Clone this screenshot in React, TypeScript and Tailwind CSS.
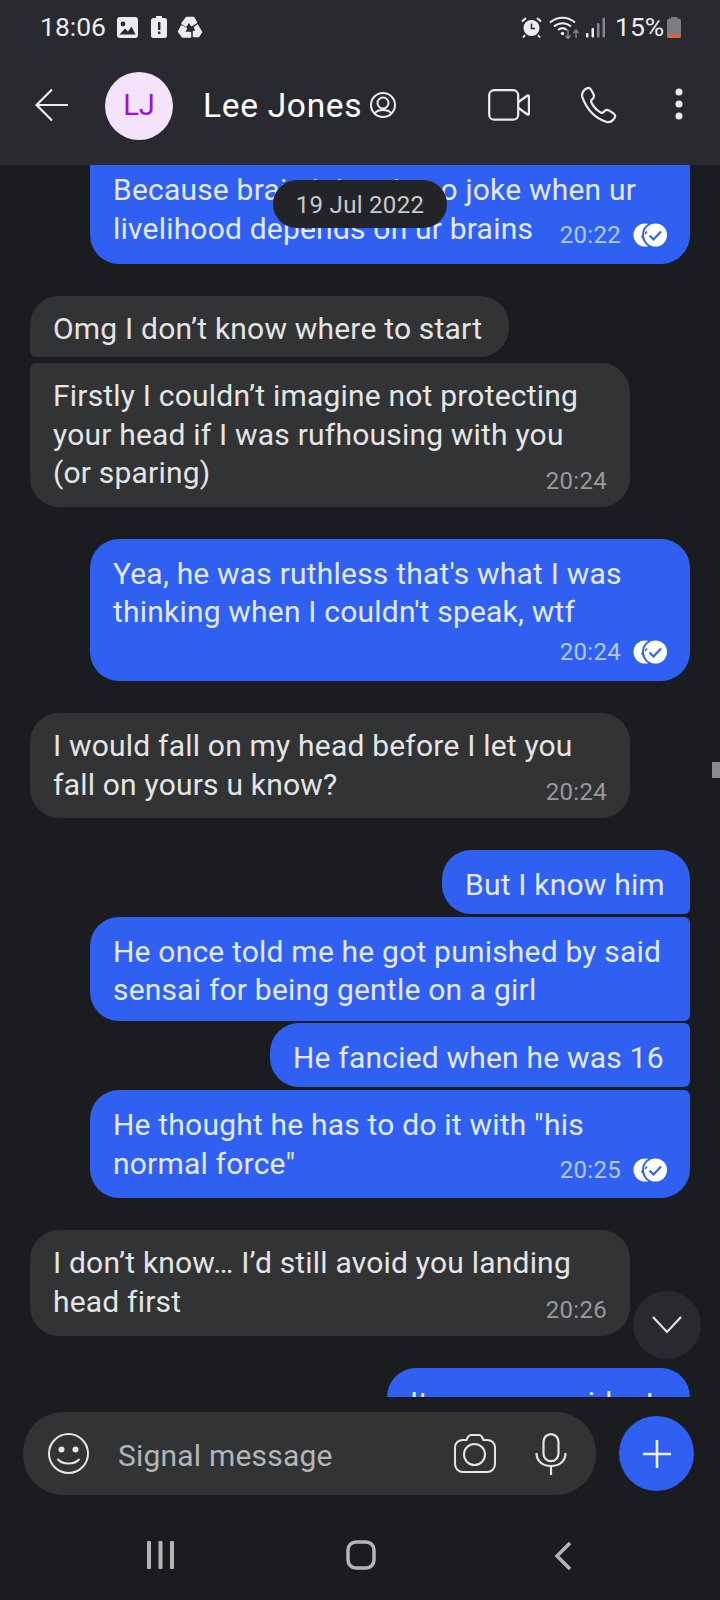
import React from "react";

const Ticks = () => (
  <svg width="34" height="24" viewBox="0 0 34 24" className="shrink-0">
    <circle cx="12" cy="12" r="11.5" fill="#fff" />
    <circle cx="22" cy="12" r="13" fill="#2f60f2" />
    <circle cx="22.500" cy="12" r="11.500" fill="#fff" />
    <path d="M8.500 13l2.500 3M12 11l2-2.500" stroke="#2f60f2" strokeWidth="1.500" fill="none" />
    <path d="M16.500 12.500l4 4 7.500-8" stroke="#2f60f2" strokeWidth="2" fill="none" />
  </svg>
);

const Meta = ({ time, out }: { time: string; out?: boolean }) => (
  <div className={`flex items-center justify-end gap-[12px] text-[24px] leading-[28px] tracking-[0.3px] ${out ? "text-[#b5c8fb]" : "text-[#98999b]"}`}>
    <span>{time}</span>
    {out && <Ticks />}
  </div>
);

const In = ({ children, cls, meta }: { children: React.ReactNode; cls: string; meta?: React.ReactNode }) => (
  <div className={`${cls} shrink-0 rounded-[29px] bg-[#323335] pl-[23px] pr-[23px] pt-[14px] text-[30px] leading-[38.700px] tracking-[0.2px] text-[#e4e5e7]`}>
    {children}
    {meta}
  </div>
);

function Out({ children, cls }: { children: React.ReactNode; cls: string }) {
  return (
    <div className={`${cls} ml-auto shrink-0 rounded-[29px] bg-[#2f60f2] pl-[23px] pr-[23px] pt-[15.500px] text-[30px] leading-[38.700px] tracking-[0.2px] text-[#e3e9fd]`}>
      {children}
    </div>
  );
}

export default function App() {
  return (
    <div className="flex h-[1600px] w-[720px] flex-col overflow-hidden bg-[#1b1c1f] font-['Roboto',sans-serif]">
      {/* Header */}
      <header className="h-[165px] shrink-0 bg-[#282a30] text-[#ececee]">
        <div className="flex h-[54px] items-center pl-[40px] pr-[39px]">
          <span className="text-[26.500px] leading-none">18:06</span>
          <svg className="ml-[11px]" width="21" height="21" viewBox="0 0 21 21">
            <rect width="21" height="21" rx="3" fill="#ececee" />
            <circle cx="6" cy="7" r="2.400" fill="#282a30" />
            <path d="M2.500 17.500l5.500-6 3 3 3.500-5 4 8z" fill="#282a30" />
          </svg>
          <svg className="ml-[13px]" width="16" height="22" viewBox="0 0 16 22">
            <path d="M5 0h6v2h2.500A2.500 2.500 0 0116 4.500V19.500A2.500 2.500 0 0113.500 22h-11A2.500 2.500 0 010 19.500V4.500A2.500 2.500 0 012.500 2H5z" fill="#ececee" />
            <rect x="7" y="6" width="2.400" height="8" fill="#282a30" />
            <rect x="7" y="15.500" width="2.400" height="2.500" fill="#282a30" />
          </svg>
          <svg className="ml-[10px]" width="26" height="24" viewBox="0 0 26 24" fill="#ececee" stroke="#ececee" strokeWidth="1.500" strokeLinejoin="round">
            <path d="M9.500 2.500h7l3 5-5 3-2.500-4-3 4.500-4-2.500z" />
            <path d="M20.500 10l4 7-3 4.500h-5v-5h3l-2-4z" />
            <path d="M13.500 22h-8l-4-5.500 3-5.500 5 2.500-2.500 4h6.500z" />
          </svg>
          <div className="flex-1" />
          <svg width="21" height="21" viewBox="0 0 21 21">
            <circle cx="10.500" cy="11" r="8" fill="#ececee" />
            <path d="M10.500 6.500V11.500H14" stroke="#282a30" strokeWidth="1.600" fill="none" />
            <path d="M1 4.500L5 1M20 4.500L16 1M4 18l-2 2.500M17 18l2 2.500" stroke="#ececee" strokeWidth="2" fill="none" />
          </svg>
          <svg className="ml-[7px]" width="31" height="24" viewBox="0 0 31 24">
            <path d="M1 7.500C8 1 19 1 26 7.500M5 11.500C10 7 17 7 22 11.500M9 15C12 12.500 15 12.500 18 15" stroke="#ececee" strokeWidth="2" fill="none" />
            <circle cx="13.500" cy="18.500" r="1.800" fill="#ececee" />
            <path d="M19 15v8M16.500 20.500L19 23.500 21.500 20.500" stroke="#85868a" strokeWidth="1.500" fill="none" />
            <path d="M27 23v-8M24.500 18L27 15 29.500 18" stroke="#85868a" strokeWidth="1.500" fill="none" />
          </svg>
          <svg className="ml-[6px]" width="19" height="21" viewBox="0 0 19 21">
            <rect x="0" y="16" width="2.500" height="4.500" rx="1" fill="#ececee" />
            <rect x="5.500" y="11" width="2.500" height="9.500" rx="1" fill="#ececee" />
            <rect x="11" y="6" width="2.500" height="14.500" rx="1" fill="#85868a" />
            <rect x="16.500" y="0.500" width="2.500" height="20" rx="1" fill="#85868a" />
          </svg>
          <span className="ml-[10px] w-[47px] text-[26.500px] leading-none">15%</span>
          <svg className="ml-[5px]" width="14" height="21" viewBox="0 0 14 21">
            <path d="M4 0h6v1.500h1.500A2.500 2.500 0 0114 4v14.500A2.500 2.500 0 0111.500 21h-9A2.500 2.500 0 010 18.500V4A2.500 2.500 0 012.500 1.500H4z" fill="#7c7d81" />
            <path d="M0 17.500h14v1A2.500 2.500 0 0111.500 21h-9A2.500 2.500 0 010 18.500z" fill="#e0643c" />
          </svg>
        </div>
        <div className="flex h-[102px] items-center">
          <svg className="ml-[35px]" width="34" height="34" viewBox="0 0 34 34" fill="none" stroke="#ececee" strokeWidth="2.200">
            <path d="M1.500 17H33M17 1.500L1.500 17 17 32.500" />
          </svg>
          <div className="ml-[36px] mt-[2px] flex h-[68px] w-[68px] items-center justify-center rounded-full bg-[#f4e3fb] text-[29px] text-[#9a10e0]">LJ</div>
          <span className="ml-[30px] mt-[1px] text-[33.500px] leading-none tracking-[0.7px] text-white">Lee Jones</span>
          <svg className="ml-[8px]" width="26" height="26" viewBox="0 0 26 26" fill="none" stroke="#ececee" strokeWidth="2">
            <circle cx="13" cy="13" r="12" />
            <circle cx="13" cy="11" r="5.500" />
            <path d="M5 21c3-4 13-4 16 0" />
          </svg>
          <svg className="ml-[92px]" width="42" height="32" viewBox="0 0 42 32" fill="none" stroke="#ececee" strokeWidth="2.200">
            <rect x="1.200" y="1.200" width="29" height="29.500" rx="5" />
            <path d="M30.500 13l9-6.500c.8-.5 1.400 0 1.400.8v17.400c0 .8-.6 1.300-1.400.8l-9-6.500" />
          </svg>
          <svg className="ml-[50px]" width="38" height="38" viewBox="0 0 24 24" fill="none" stroke="#ececee" strokeWidth="1.400" strokeLinejoin="round">
            <path d="M5.500 1.200c-1 0-2.400.8-3.300 2-.9 1.300-1.200 2.600-.7 4 1.500 4 3.200 6.800 5.700 9.500 2.700 2.800 5.800 4.800 9.600 6 1.500.4 3-.2 4.100-1.300 1-1 1.500-2.300 1.200-3-.3-.8-3.300-2.800-4.500-3.200-1-.3-1.800.2-2.500 1-.6.700-1.200 1-2 .6-2.500-1.400-4.700-3.800-6-6.500-.3-.8 0-1.400.7-2 .8-.7 1.200-1.500 1-2.500C8 4 6.500 1.200 5.500 1.200z" />
          </svg>
          <svg className="ml-[57px]" width="8" height="34" viewBox="0 0 8 34" fill="#ececee">
            <circle cx="4" cy="4" r="3.500" />
            <circle cx="4" cy="16" r="3.500" />
            <circle cx="4" cy="28" r="3.500" />
          </svg>
        </div>
      </header>

      {/* Messages */}
      <main className="relative flex h-[1232px] shrink-0 flex-col overflow-hidden pl-[30px] pr-[30px]">
        <div className="mt-[-60px] ml-auto h-[159px] w-[600px] shrink-0 rounded-[29px] bg-[#2f60f2] pl-[23px] pr-[23px] pt-[66px] text-[30px] leading-[38.700px] tracking-[0.2px] text-[#e3e9fd]">
          <div>Because brain injury is no joke when ur</div>
          <div className="flex items-center justify-between">
            <span>livelihood depends on ur brains</span>
            <span className="mt-[11px]"><Meta time="20:22" out /></span>
          </div>
        </div>

        <In cls="mt-[32px] h-[61px] w-[479px] rounded-bl-[6px]">Omg I don’t know where to start</In>
        <In cls="mt-[6px] h-[144px] w-[600px] rounded-tl-[6px]" meta={<div className="mt-[-26px]"><Meta time="20:24" /></div>}>
          Firstly I couldn’t imagine not protecting<br />your head if I was rufhousing with you<br />(or sparing)
        </In>

        <div className="mt-[32px]" />
        <Out cls="h-[142px] w-[600px]">
          Yea, he was ruthless that's what I was<br />thinking when I couldn't speak, wtf
          <div className="mt-[6px]"><Meta time="20:24" out /></div>
        </Out>

        <In cls="mt-[32px] h-[105px] w-[600px]" meta={<div className="mt-[-26px]"><Meta time="20:24" /></div>}>
          I would fall on my head before I let you<br />fall on yours u know?
        </In>

        <div className="mt-[32px]" />
        <Out cls="h-[64px] w-[248px] rounded-br-[6px]">But I know him</Out>
        <div className="mt-[3px]" />
        <Out cls="h-[104px] w-[600px] rounded-tr-[6px] rounded-br-[6px]">He once told me he got punished by said<br />sensai for being gentle on a girl</Out>
        <div className="mt-[2px]" />
        <Out cls="h-[64px] w-[420px] rounded-tr-[6px] rounded-br-[6px]">He fancied when he was 16</Out>
        <div className="mt-[3px]" />
        <Out cls="h-[108px] w-[600px] rounded-tr-[6px]">
          <div>He thought he has to do it with "his</div>
          <div className="flex items-center justify-between">
            <span>normal force"</span>
            <span className="mt-[12px]"><Meta time="20:25" out /></span>
          </div>
        </Out>

        <In cls="mt-[32px] h-[106px] w-[600px]" meta={<div className="mt-[-25px]"><Meta time="20:26" /></div>}>
          I don’t know… I’d still avoid you landing<br />head first
        </In>

        <div className="mt-[32px]" />
        <Out cls="h-[80px] w-[303px]">It was an accident</Out>

        {/* Date pill */}
        <div className="absolute left-[273px] top-[15px] flex h-[48px] w-[174px] items-center justify-center rounded-full bg-[#232427] pt-[2px] text-[24px] tracking-[0.3px] text-[#c9cacb]">19 Jul 2022</div>
        {/* Scroll down */}
        <div className="absolute left-[633px] top-[1126px] flex h-[68px] w-[68px] items-center justify-center rounded-full bg-[#282a30]">
          <svg width="32" height="20" viewBox="0 0 32 20" fill="none" stroke="#e2e3e5" strokeWidth="2.200"><path d="M2 2l14 15L30 2" /></svg>
        </div>
        {/* Scrollbar thumb */}
        <div className="absolute right-0 top-[597px] h-[16px] w-[8px] bg-[#8a8b8d]" />
      </main>

      {/* Composer */}
      <footer className="flex h-[98px] shrink-0 items-start border-t border-[#17181a] pl-[23px] pt-[14px]">
        <div className="flex h-[83px] w-[573px] items-center rounded-[40px] bg-[#323335] pl-[25px]">
          <svg width="41" height="41" viewBox="0 0 41 41" fill="none" stroke="#e6e6e8" strokeWidth="2">
            <circle cx="20.500" cy="20.500" r="19.500" />
            <circle cx="13.500" cy="16.500" r="3" fill="#e6e6e8" stroke="none" />
            <circle cx="27.500" cy="16.500" r="3" fill="#e6e6e8" stroke="none" />
            <path d="M9.500 26c5 6 17 6 22 0" />
          </svg>
          <span className="ml-[29px] flex-1 pt-[3px] text-[30px] tracking-[0.2px] text-[#b4b5ba]">Signal message</span>
          <svg width="42" height="39" viewBox="0 0 42 39" fill="none" stroke="#e6e6e8" strokeWidth="2">
            <path d="M9 6h3.500l1.500-3c.7-1.300 1.500-2 3-2h8c1.500 0 2.300.7 3 2l1.500 3H33c4.500 0 8 3 8 7.500V30c0 4.500-3.500 8-8 8H9c-4.500 0-8-3.500-8-8V13.500C1 9 4.500 6 9 6z" />
            <circle cx="20.500" cy="20.500" r="10.500" />
          </svg>
          <svg className="ml-[39px] mr-[29px]" width="32" height="42" viewBox="0 0 32 42" fill="none" stroke="#e6e6e8" strokeWidth="2.200">
            <rect x="8.500" y="1.200" width="15" height="27" rx="7.500" />
            <path d="M1.500 20c0 8 6 13 14.500 13s14.500-5 14.500-13M16 33v9" />
          </svg>
        </div>
        <div className="ml-[23px] mt-[4px] flex h-[75px] w-[75px] items-center justify-center rounded-full bg-[#2f60f2]">
          <svg width="30" height="30" viewBox="0 0 30 30" stroke="#eef1fe" strokeWidth="2.600"><path d="M15 1v28M1 15h28" /></svg>
        </div>
      </footer>

      {/* Nav */}
      <nav className="flex flex-1 items-start pl-[147px] pt-[46px]">
        <svg width="27" height="28" viewBox="0 0 27 28" fill="#b4b5b6">
          <rect x="0" width="4" height="28" rx="1" />
          <rect x="11.500" width="4" height="28" rx="1" />
          <rect x="23" width="4" height="28" rx="1" />
        </svg>
        <svg className="ml-[172px] mt-[-1px]" width="30" height="30" viewBox="0 0 30 30" fill="none" stroke="#b4b5b6" strokeWidth="3.500"><rect x="2" y="2" width="26" height="26" rx="8" /></svg>
        <svg className="ml-[178px]" width="18" height="30" viewBox="0 0 18 30" fill="none" stroke="#b4b5b6" strokeWidth="3.500"><path d="M16 2L3 15l13 13" /></svg>
      </nav>
    </div>
  );
}
